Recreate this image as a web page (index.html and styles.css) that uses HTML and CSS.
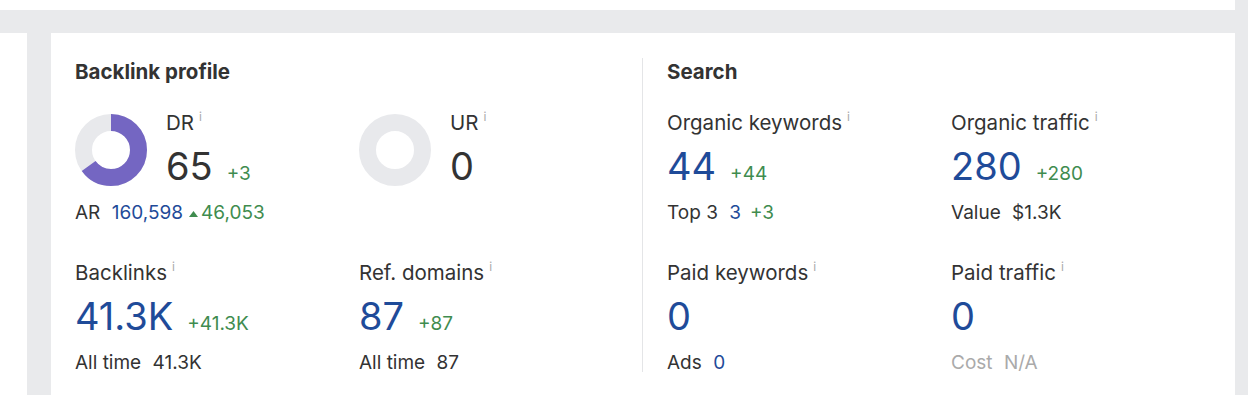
FILE: index.html
```html
<!DOCTYPE html>
<html lang="en">
<head>
  <meta charset="UTF-8">
  <title>Overview</title>
  <link rel="stylesheet" href="styles.css">
</head>
<body>
  <div class="top-panel"></div>
  <div class="main">
    <div class="side-panel"></div>
    <div class="card">
      <!-- Backlink profile -->
      <section class="section backlinks">
        <h2 class="section-title">Backlink profile</h2>
        <div class="grid">
          <div class="metric">
            <div class="rating">
              <svg class="donut" width="72" height="72" viewBox="0 0 72 72">
                <circle cx="36" cy="36" r="27.5" fill="none" stroke="#e8e9ec" stroke-width="17"/>
                <circle cx="36" cy="36" r="27.5" fill="none" stroke="#7466c2" stroke-width="17"
                        stroke-dasharray="112.3 172.8" transform="rotate(-90 36 36)"/>
              </svg>
              <div>
                <div class="label">DR<span class="info">i</span></div>
                <div class="value-row"><span class="value dark">65</span><span class="delta">+3</span></div>
              </div>
            </div>
            <div class="sub">AR <span class="blue">160,598</span><span class="delta-sm"><svg class="up" width="9" height="6" viewBox="0 0 9 6"><path d="M0 6 L4.5 0 L9 6 Z" fill="#3f8c4f"/></svg>46,053</span></div>
          </div>
          <div class="metric">
            <div class="rating">
              <svg class="donut" width="72" height="72" viewBox="0 0 72 72">
                <circle cx="36" cy="36" r="27.5" fill="none" stroke="#e8e9ec" stroke-width="17"/>
              </svg>
              <div>
                <div class="label">UR<span class="info">i</span></div>
                <div class="value-row"><span class="value dark">0</span></div>
              </div>
            </div>
          </div>
          <div class="metric">
            <div class="label">Backlinks<span class="info">i</span></div>
            <div class="value-row"><span class="value">41.3K</span><span class="delta">+41.3K</span></div>
            <div class="sub">All time <span>41.3K</span></div>
          </div>
          <div class="metric">
            <div class="label">Ref. domains<span class="info">i</span></div>
            <div class="value-row"><span class="value">87</span><span class="delta">+87</span></div>
            <div class="sub">All time <span>87</span></div>
          </div>
        </div>
      </section>

      <!-- Search -->
      <section class="section search">
        <h2 class="section-title">Search</h2>
        <div class="grid">
          <div class="metric">
            <div class="label">Organic keywords<span class="info">i</span></div>
            <div class="value-row"><span class="value">44</span><span class="delta">+44</span></div>
            <div class="sub">Top 3 <span class="blue">3</span><span class="green">+3</span></div>
          </div>
          <div class="metric">
            <div class="label">Organic traffic<span class="info">i</span></div>
            <div class="value-row"><span class="value">280</span><span class="delta">+280</span></div>
            <div class="sub">Value <span>$1.3K</span></div>
          </div>
          <div class="metric">
            <div class="label">Paid keywords<span class="info">i</span></div>
            <div class="value-row"><span class="value">0</span></div>
            <div class="sub">Ads <span class="blue">0</span></div>
          </div>
          <div class="metric">
            <div class="label">Paid traffic<span class="info">i</span></div>
            <div class="value-row"><span class="value">0</span></div>
            <div class="sub muted">Cost <span>N/A</span></div>
          </div>
        </div>
      </section>
    </div>
  </div>
</body>
</html>
```

FILE: styles.css
```css
body {
  margin: 0;
  background-color: #e9eaec;
  font-family: Inter, "Noto Sans", sans-serif;
  color: #333;
  overflow: hidden;
}
.top-panel {
  height: 10px;
  margin-right: 13px;
  background-color: #fff;
}
.main {
  display: flex;
  gap: 24px;
  margin-top: 23px;
  padding-right: 13px;
}
.side-panel {
  width: 28px;
  background-color: #fff;
}
.card {
  flex: 1;
  display: flex;
  height: 362px;
  box-sizing: border-box;
  padding: 25px 0 23px;
  background-color: #fff;
}
.section {
  box-sizing: border-box;
  padding: 2px 0 0 24px;
}
.backlinks {
  width: 591px;
}
.search {
  flex: 1;
  border-left: 1px solid #e4e5e7;
}
.section-title {
  margin: 0 0 27px;
  font-size: 20.5px;
  line-height: 24px;
  font-weight: 700;
  color: #333;
}
.grid {
  display: grid;
  grid-template-columns: 284px 284px;
  row-gap: 37px;
}
.metric {
  display: flex;
  flex-direction: column;
}
.rating {
  display: flex;
  align-items: center;
  gap: 19px;
}
.label {
  font-size: 20.5px;
  line-height: 24px;
  color: #333;
  white-space: nowrap;
}
.info {
  margin-left: 5px;
  font-size: 12px;
  line-height: 0;
  color: #aaa;
  vertical-align: 9px;
}
.value-row {
  display: flex;
  align-items: baseline;
  margin-top: 9px;
}
.value {
  font-size: 38px;
  line-height: 44px;
  color: #1f4b99;
}
.value.dark {
  color: #333;
}
.delta {
  margin-left: 14px;
  font-size: 19px;
  color: #3f8c4f;
}
.sub {
  margin-top: 14px;
  font-size: 19px;
  line-height: 22px;
  color: #333;
  white-space: nowrap;
}
.sub span {
  margin-left: 6px;
}
.sub .blue {
  color: #1f4b99;
}
.sub .green {
  margin-left: 9px;
  color: #3f8c4f;
}
.delta-sm {
  color: #3f8c4f;
  margin-left: 9px;
}
.up {
  margin-right: 3px;
  vertical-align: 2px;
}
.muted {
  color: #aaa;
}
```
